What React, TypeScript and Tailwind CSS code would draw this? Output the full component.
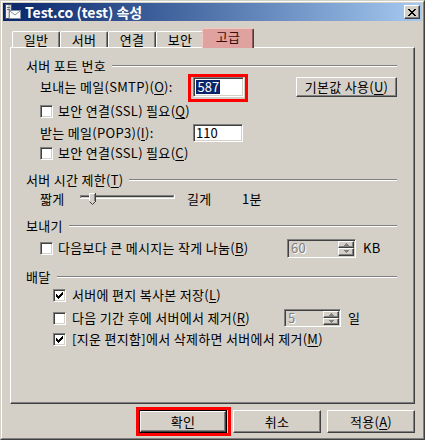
import React from 'react'

const sunken =
  'border border-t-[#808080] border-l-[#808080] border-r-white border-b-white shadow-[inset_1px_1px_0_#404040,inset_-1px_-1px_0_#D4D0C8]'
const raised =
  'border border-t-white border-l-white border-r-[#404040] border-b-[#404040] shadow-[inset_-1px_-1px_0_#808080]'

// classic 7x7 check mark, one 3px column per x
const CHECK_COLS = [2, 3, 4, 3, 2, 1, 0]

function M({ children }: { children: React.ReactNode }) {
  return <span className="underline decoration-1 underline-offset-[2px]">{children}</span>
}

function Checkbox({ checked = false }: { checked?: boolean }) {
  return (
    <div className={`relative w-[13px] h-[13px] shrink-0 bg-white ${sunken}`}>
      {checked && (
        <svg className="absolute left-px top-px" width="9" height="9" viewBox="0 0 9 9" shapeRendering="crispEdges">
          {CHECK_COLS.map((y, x) => (
            <rect key={x} x={x + 1} y={y + 1} width="1" height="3" fill="#000" />
          ))}
        </svg>
      )}
    </div>
  )
}

function GroupHeader({ children }: { children: React.ReactNode }) {
  return (
    <div className="h-[16px] flex items-center">
      <span className="whitespace-nowrap">{children}</span>
      <div className="flex-1 ml-[6px] h-[2px] border-t border-t-[#808080] border-b border-b-white" />
    </div>
  )
}

function SpinBtn({ up = false }: { up?: boolean }) {
  return (
    <div className={`flex-1 bg-[#D4D0C8] ${raised} flex items-center justify-center`}>
      <svg width="5" height="3" viewBox="0 0 5 3" shapeRendering="crispEdges">
        {up ? (
          <path d="M2 0h1v1h1v1h1v1H0V2h1V1h1z" fill="#808080" />
        ) : (
          <path d="M0 0h5v1H4v1H3v1H2V2H1V1H0z" fill="#808080" />
        )}
      </svg>
    </div>
  )
}

function Spinner({ value, className }: { value: string; className: string }) {
  return (
    <div className={`${className} ${sunken} bg-[#D4D0C8] flex p-px`}>
      <span className="flex-1 pl-[2px] flex items-center text-[#808080] [text-shadow:1px_1px_0_#fff]">{value}</span>
      <div className="w-[16px] flex flex-col">
        <SpinBtn up />
        <SpinBtn />
      </div>
    </div>
  )
}

function Button({ children, def = false }: { children: React.ReactNode; def?: boolean }) {
  if (def) {
    return (
      <div className="relative w-[88px] h-[23px]">
        <div className="w-full h-full border border-black">
          <div className={`w-full h-full ${raised} bg-[#D4D0C8] flex items-center justify-center`}>{children}</div>
        </div>
        {/* red annotation frame */}
        <div className="absolute -left-[3px] -top-[3px] w-[95px] h-[29px] border-[3px] border-[#FF0000]" />
      </div>
    )
  }
  return (
    <div className={`w-[88px] h-[23px] ${raised} bg-[#D4D0C8] flex items-center justify-center`}>{children}</div>
  )
}

function Tab({ label, active = false }: { label: string; active?: boolean }) {
  if (active) {
    return (
      <div className="relative z-10 -mx-[2px] -mb-px w-[52px] h-[20px] bg-[#DFA29E] border-t border-l border-r border-t-[#F0C8C4] border-l-[#F0C8C4] border-r-[#404040] shadow-[inset_-1px_0_0_#8a5a58] rounded-t-[2px] flex items-center justify-center pb-[3px] text-[#3a0d0d]">
        {label}
      </div>
    )
  }
  return (
    <div className="w-[48px] h-[16px] border-t border-l border-r border-t-white border-l-white border-r-[#404040] shadow-[inset_-1px_0_0_#808080] rounded-t-[2px] flex items-center justify-center">
      {label}
    </div>
  )
}

function AppIcon() {
  return (
    <svg width="17" height="16" viewBox="0 0 17 16" shapeRendering="crispEdges">
      <rect x="1.5" y="0.5" width="6" height="14" fill="#C8C8C8" stroke="#505050" />
      <rect x="2" y="1" width="2" height="13" fill="#F0F0F0" />
      <rect x="3" y="3" width="3" height="1" fill="#707070" />
      <rect x="3" y="5" width="3" height="1" fill="#707070" />
      <rect x="5.5" y="6.5" width="11" height="8" fill="#FFFFFF" stroke="#8090A0" />
      <path d="M6 7 L11 11 L16 7" fill="none" stroke="#8090A0" strokeWidth="1" shapeRendering="auto" />
    </svg>
  )
}

function CloseBtn() {
  return (
    <div className={`w-[16px] h-[14px] bg-[#D4D0C8] ${raised} flex items-center justify-center`}>
      <svg width="8" height="7" viewBox="0 0 8 7" shapeRendering="crispEdges">
        <path d="M0 0h2v1h1v1h2V1h1V0h2v1H7v1H6v1H5v1h1v1h1v1h1v1H6V6H5V5H3v1H2v1H0V6h1V5h1V4h1V3H2V2H1V1H0z" fill="#000" />
      </svg>
    </div>
  )
}

function Slider() {
  return (
    <svg width="107" height="22" viewBox="0 0 107 22" shapeRendering="crispEdges">
      <rect x="0" y="7" width="95" height="4" fill="#fff" />
      <rect x="0" y="7" width="94" height="3" fill="#808080" />
      <rect x="1" y="8" width="92" height="2" fill="#404040" />
      <rect x="1" y="9" width="93" height="1" fill="#D4D0C8" />
      <polygon points="9,5 16,5 16,13 12.5,16.5 9,13" fill="#D4D0C8" shapeRendering="auto" />
      <path d="M9.5 13.5V5.5H15" stroke="#fff" fill="none" />
      <path d="M15.5 5V13.5" stroke="#404040" fill="none" />
      <path d="M14.5 6V13" stroke="#808080" fill="none" />
      <path d="M9.5 13.5L12.5 16.5L15.5 13.5" stroke="#404040" fill="none" shapeRendering="auto" />
    </svg>
  )
}

export default function App() {
  return (
    <div className="w-[425px] h-[440px] bg-[#D4D0C8] border border-t-[#D4D0C8] border-l-[#D4D0C8] border-r-[#404040] border-b-[#404040] font-['Noto_Sans_CJK_KR','Noto_Sans',sans-serif] text-[13px] leading-[14px] tracking-[0.3px] text-black">
      <div className="h-full border border-t-white border-l-white border-r-[#808080] border-b-[#808080] p-px flex flex-col">
        {/* title bar */}
        <div className="h-[18px] flex items-center bg-linear-to-r from-[#0A246A] to-[#A6CAF0] pl-px pr-[2px]">
          <AppIcon />
          <span className="ml-[4px] text-white font-bold text-[14px] tracking-normal whitespace-nowrap">Test.co (test) 속성</span>
          <div className="ml-auto">
            <CloseBtn />
          </div>
        </div>

        {/* tabs */}
        <div className="mt-[7px] mx-[7px] h-[19px] pl-[2px] flex items-end">
          <Tab label="일반" />
          <Tab label="서버" />
          <Tab label="연결" />
          <Tab label="보안" />
          <Tab label="고급" active />
        </div>

        {/* tab panel */}
        <div className="mx-[7px] h-[357px] border border-t-white border-l-white border-r-[#404040] border-b-[#404040]">
          <div className="h-full border-r border-b border-r-[#808080] border-b-[#808080] pl-[15px] pr-[16px] pt-[10px]">
            <GroupHeader>서버 포트 번호</GroupHeader>

            <div className="h-[26px] flex items-center pl-[14px]">
              <span className="w-[155px] whitespace-nowrap">
                보내는 메일(SMTP)(<M>O</M>):
              </span>
              <div className="relative w-[51px] h-[20px]">
                <div className={`w-full h-full bg-white ${sunken} flex items-center pl-[2px]`}>
                  <span className="bg-[#0A246A] text-white px-px tracking-normal">587</span>
                </div>
                <div className="absolute -left-[5px] -top-[3px] w-[60px] h-[28px] border-[3px] border-[#FF0000]" />
              </div>
              <div className={`ml-[52px] w-[102px] h-[20px] ${raised} flex items-center justify-center whitespace-nowrap`}>
                기본값 사용(<M>U</M>)
              </div>
            </div>

            <div className="h-[22px] flex items-center pl-[14px]">
              <Checkbox />
              <span className="ml-[5px] whitespace-nowrap">
                보안 연결(SSL) 필요(<M>Q</M>)
              </span>
            </div>

            <div className="h-[22px] flex items-center pl-[14px]">
              <span className="w-[153px] whitespace-nowrap">
                받는 메일(POP3)(<M>I</M>):
              </span>
              <div className={`w-[50px] h-[18px] bg-white ${sunken} flex items-center pl-[2px] tracking-normal`}>110</div>
            </div>

            <div className="h-[18px] flex items-center pl-[14px]">
              <Checkbox />
              <span className="ml-[5px] whitespace-nowrap">
                보안 연결(SSL) 필요(<M>C</M>)
              </span>
            </div>

            <div className="mt-[10px]">
              <GroupHeader>
                서버 시간 제한(<M>T</M>)
              </GroupHeader>
            </div>

            <div className="h-[22px] flex items-center pl-[14px]">
              <span className="w-[40px]">짧게</span>
              <Slider />
              <span className="w-[55px]">길게</span>
              <span>1분</span>
            </div>

            <div className="mt-[8px]">
              <GroupHeader>보내기</GroupHeader>
            </div>

            <div className="h-[28px] flex items-center pl-[14px]">
              <div className="w-[247px] flex items-center">
                <Checkbox />
                <span className="ml-[5px] whitespace-nowrap">
                  다음보다 큰 메시지는 작게 나눔(<M>B</M>)
                </span>
              </div>
              <Spinner value="60" className="w-[69px] h-[19px]" />
              <span className="ml-[7px]">KB</span>
            </div>

            <div className="mt-[7px]">
              <GroupHeader>배달</GroupHeader>
            </div>

            <div className="h-[20px] flex items-center pl-[27px]">
              <Checkbox checked />
              <span className="ml-[6px] whitespace-nowrap">
                서버에 편지 복사본 저장(<M>L</M>)
              </span>
            </div>

            <div className="h-[26px] flex items-center pl-[27px]">
              <div className="w-[231px] flex items-center">
                <Checkbox />
                <span className="ml-[6px] whitespace-nowrap">
                  다음 기간 후에 서버에서 제거(<M>R</M>)
                </span>
              </div>
              <Spinner value="5" className="w-[57px] h-[18px]" />
              <span className="ml-[7px]">일</span>
            </div>

            <div className="h-[16px] flex items-center pl-[27px]">
              <Checkbox checked />
              <span className="ml-[6px] whitespace-nowrap">
                [지운 편지함]에서 삭제하면 서버에서 제거(<M>M</M>)
              </span>
            </div>
          </div>
        </div>

        {/* dialog buttons */}
        <div className="mt-[6px] pr-[7px] flex justify-end gap-[6px]">
          <Button def>확인</Button>
          <Button>취소</Button>
          <Button>
            적용(<M>A</M>)
          </Button>
        </div>
      </div>
    </div>
  )
}
